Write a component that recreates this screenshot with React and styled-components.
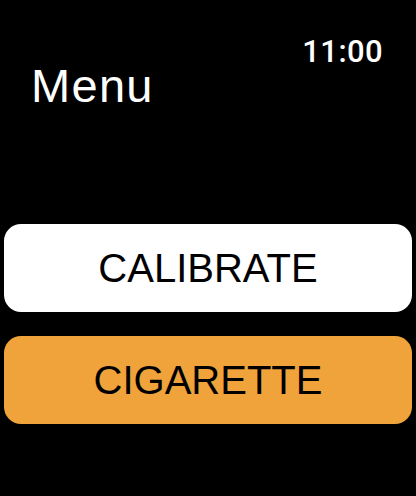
import React from "react";
import styled, { createGlobalStyle } from "styled-components";

const Global = createGlobalStyle`
  html, body { margin: 0; padding: 0; background: #000; }
  body { font-family: "Liberation Sans", Arial, sans-serif; }
  #root { min-height: 496px; }
`;

const Screen = styled.div`
  width: 416px;
  height: 496px;
  background: #000;
  display: flex;
  flex-direction: column;
  box-sizing: border-box;
  padding: 39px 4px 0 4px;
`;

const Header = styled.header`
  display: flex;
  flex-direction: column;
  padding: 0 29px 0 27px;
`;

const Time = styled.div`
  align-self: flex-end;
  color: #fff;
  font-family: Roboto, "Liberation Sans", sans-serif;
  font-weight: 500;
  font-size: 31px;
  line-height: 26px;
  letter-spacing: 0.4px;
`;

const Title = styled.h1`
  margin: 1px 0 0 0;
  color: #fff;
  font-weight: 400;
  font-size: 47px;
  line-height: 40px;
  letter-spacing: 1.3px;
`;

const Buttons = styled.div`
  display: flex;
  flex-direction: column;
  gap: 24px;
  margin-top: 118px;
`;

const MenuButton = styled.button`
  height: 88px;
  border: none;
  border-radius: 17px;
  background: ${(p) => p.$bg};
  color: #000;
  font-family: "Liberation Sans", Arial, sans-serif;
  font-size: 40px;
  display: flex;
  align-items: center;
  justify-content: center;
  padding: 0;
  cursor: pointer;
`;

export default function App() {
  return (
    <>
      <Global />
      <Screen>
        <Header>
          <Time>11:00</Time>
          <Title>Menu</Title>
        </Header>
        <Buttons>
          <MenuButton $bg="#ffffff">CALIBRATE</MenuButton>
          <MenuButton $bg="#f0a23b">CIGARETTE</MenuButton>
        </Buttons>
      </Screen>
    </>
  );
}
